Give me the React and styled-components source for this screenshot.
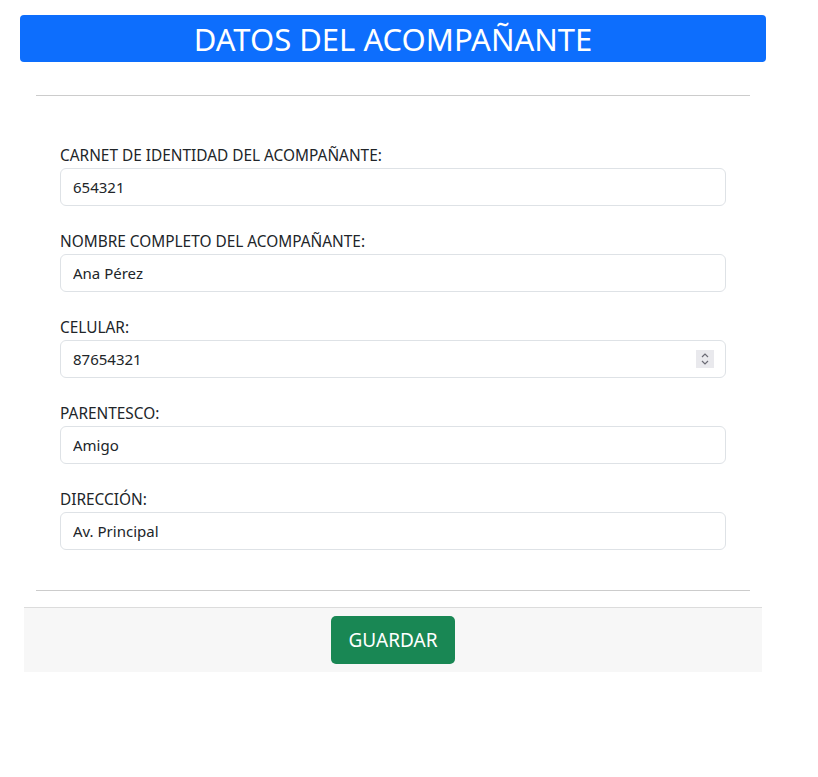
import React from 'react';
import styled, { createGlobalStyle } from 'styled-components';

const GlobalStyle = createGlobalStyle`
  body {
    margin: 0;
    background: #fff;
    font-family: "Noto Sans", "Open Sans", sans-serif;
    color: #212529;
  }
`;

const Page = styled.div`
  width: 746px;
  padding: 15px 0 0 20px;
`;

const Header = styled.h1`
  margin: 0;
  height: 47px;
  display: flex;
  align-items: center;
  justify-content: center;
  background: #0d6efd;
  border-radius: 4px;
  color: #fff;
  font-size: 31px;
  font-weight: 400;
`;

const Card = styled.div`
  margin: 0 4px;
  display: flex;
  flex-direction: column;
`;

const Body = styled.div`
  padding: 33px 12px 0;
`;

const Rule = styled.hr`
  margin: 0;
  border: 0;
  border-top: 1px solid #cccccc;
`;

const Form = styled.form`
  padding: 48px 24px 16px;
`;

const Group = styled.div`
  margin-bottom: 24px;
`;

const Label = styled.label`
  display: block;
  font-size: 15.4px;
  line-height: 24px;
`;

const InputWrap = styled.div`
  position: relative;
`;

const Input = styled.input`
  box-sizing: border-box;
  width: 100%;
  height: 38px;
  padding: 6px 12px;
  border: 1px solid #dee2e6;
  border-radius: 6px;
  font-family: inherit;
  font-size: 15px;
  color: #212529;
  background: #fff;
  outline: none;
`;

const Spinner = styled.span`
  position: absolute;
  right: 12px;
  top: 10px;
  width: 18px;
  height: 18px;
  background: #e9e9ed;
  display: flex;
  align-items: center;
  justify-content: center;
`;

const Footer = styled.div`
  margin-top: 16px;
  background: #f7f7f7;
  border-top: 1px solid #dcdcdc;
  padding: 8px 0;
  display: flex;
  justify-content: center;
`;

const Button = styled.button`
  height: 48px;
  width: 124px;
  border: 0;
  border-radius: 5px;
  background: #198754;
  color: #fff;
  font-family: inherit;
  font-size: 19px;
`;

const fields = [
  { label: 'CARNET DE IDENTIDAD DEL ACOMPAÑANTE:', value: '654321' },
  { label: 'NOMBRE COMPLETO DEL ACOMPAÑANTE:', value: 'Ana Pérez' },
  { label: 'CELULAR:', value: '87654321', number: true },
  { label: 'PARENTESCO:', value: 'Amigo' },
  { label: 'DIRECCIÓN:', value: 'Av. Principal' }
];

export default function App() {
  return (
    <Page>
      <GlobalStyle />
      <Header>DATOS DEL ACOMPAÑANTE</Header>
      <Card>
        <Body>
          <Rule />
          <Form onSubmit={e => e.preventDefault()}>
            {fields.map(f => (
              <Group key={f.label}>
                <Label>{f.label}</Label>
                <InputWrap>
                  <Input type="text" defaultValue={f.value} />
                  {f.number && (
                    <Spinner>
                      <svg width="10" height="14" viewBox="0 0 10 14" fill="none" stroke="#6b6b75" strokeWidth="1.2">
                        <path d="M2 5 L5 2 L8 5" />
                        <path d="M2 9 L5 12 L8 9" />
                      </svg>
                    </Spinner>
                  )}
                </InputWrap>
              </Group>
            ))}
          </Form>
          <Rule />
        </Body>
        <Footer>
          <Button type="button">GUARDAR</Button>
        </Footer>
      </Card>
    </Page>
  );
}
